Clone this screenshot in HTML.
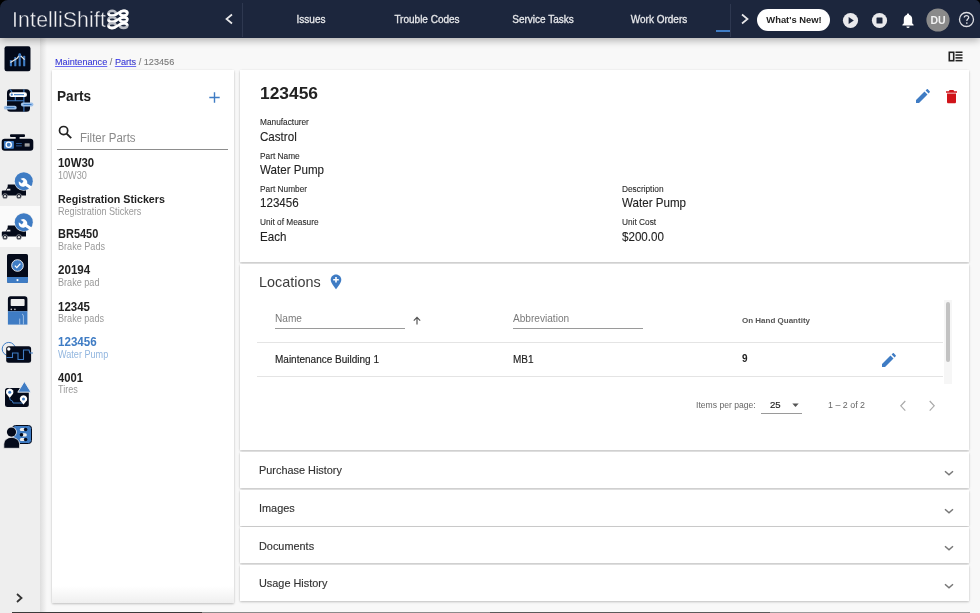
<!DOCTYPE html>
<html><head><meta charset="utf-8"><style>
html,body{margin:0;padding:0;width:980px;height:613px;overflow:hidden;background:#000;}
body{position:relative;font-family:"Liberation Sans",sans-serif;}
.t{will-change:transform;}
.r{position:absolute;}
.t{position:absolute;white-space:nowrap;}
u{color:#2424f0;text-decoration:underline;text-decoration-color:#6b6bf2;}
</style></head><body>
<div class="r" style="left:0px;top:0px;width:980px;height:613px;background:#f8f8f8;"></div>
<div class="r" style="left:0px;top:37px;width:40px;height:576px;background:#eeeeee;"></div>
<div class="r" style="left:40px;top:37px;width:7px;height:576px;background:linear-gradient(90deg,#dedede,#f8f8f8);"></div>
<div class="r" style="left:0px;top:206px;width:40px;height:41px;background:#fafafa;"></div>
<div class="r" style="left:0px;top:0px;width:980px;height:37.5px;background:#1c263d;box-shadow:0 2px 8px rgba(0,0,0,0.33);"></div>
<svg class="r" style="left:0;top:0" width="12" height="12"><path d="M0 0H8A8 8 0 0 0 0 8Z" fill="#000"/></svg>
<svg class="r" style="left:968px;top:0" width="12" height="12"><path d="M12 0H7A5 5 0 0 1 12 5Z" fill="#000"/></svg>
<div class="t" style="left:11.8px;top:10.27px;font-size:21.3px;line-height:21.3px;color:#f0f0f2;-webkit-text-stroke:0.4px #1c263d;letter-spacing:0.15px;">IntelliShift</div>
<svg class="r" style="left:107.3px;top:8.5px;" width="22" height="22" viewBox="0 0 22 22"><ellipse cx="5.2" cy="4.2" rx="3.7" ry="2.3" stroke="#b9bcc4" stroke-width="2.6" fill="none"/><ellipse cx="16.6" cy="4.2" rx="3.7" ry="2.3" stroke="#fff" stroke-width="2.6" fill="none"/><path d="M1.5 4.2 C1.5 7.5 7 7.5 11 4.2 S20.3 0.9000000000000004 20.3 4.2" stroke="#fff" stroke-width="2.6" fill="none"/><ellipse cx="5.2" cy="10.6" rx="3.7" ry="2.3" stroke="#b9bcc4" stroke-width="2.6" fill="none"/><ellipse cx="16.6" cy="10.6" rx="3.7" ry="2.3" stroke="#fff" stroke-width="2.6" fill="none"/><path d="M1.5 10.6 C1.5 13.899999999999999 7 13.899999999999999 11 10.6 S20.3 7.3 20.3 10.6" stroke="#fff" stroke-width="2.6" fill="none"/><ellipse cx="5.2" cy="16.6" rx="3.7" ry="2.3" stroke="#b9bcc4" stroke-width="2.6" fill="none"/><ellipse cx="16.6" cy="16.6" rx="3.7" ry="2.3" stroke="#b9bcc4" stroke-width="2.6" fill="none"/><path d="M1.5 16.6 C1.5 19.900000000000002 7 19.900000000000002 11 16.6 S20.3 13.3 20.3 16.6" stroke="#fff" stroke-width="2.6" fill="none"/></svg>
<svg class="r" style="left:224px;top:13px;" width="10" height="12" viewBox="0 0 10 12"><path d="M8 1.5 L2.5 6 L8 10.5" stroke="#e8e8ea" stroke-width="1.7" fill="none"/></svg>
<div class="r" style="left:242px;top:3px;width:1px;height:34px;background:#2e3850;"></div>
<div class="t" style="left:111px;width:400px;text-align:center;top:14.73px;font-size:10px;line-height:10px;color:#e6e7ea;-webkit-text-stroke:0.3px #e6e7ea;">Issues</div>
<div class="t" style="left:227px;width:400px;text-align:center;top:14.73px;font-size:10px;line-height:10px;color:#e6e7ea;-webkit-text-stroke:0.3px #e6e7ea;">Trouble Codes</div>
<div class="t" style="left:343px;width:400px;text-align:center;top:14.73px;font-size:10px;line-height:10px;color:#e6e7ea;-webkit-text-stroke:0.3px #e6e7ea;">Service Tasks</div>
<div class="t" style="left:458.5px;width:400px;text-align:center;top:14.73px;font-size:10px;line-height:10px;color:#e6e7ea;-webkit-text-stroke:0.3px #e6e7ea;">Work Orders</div>
<div class="r" style="left:716px;top:30px;width:15px;height:2px;background:#3f7cc4;"></div>
<div class="r" style="left:730px;top:4px;width:1px;height:33px;background:#2e3850;"></div>
<svg class="r" style="left:740px;top:13px;" width="10" height="12" viewBox="0 0 10 12"><path d="M2 1.5 L7.5 6 L2 10.5" stroke="#e8e8ea" stroke-width="1.7" fill="none"/></svg>
<div class="r" style="left:757px;top:9px;width:73px;height:22px;background:#fff;border-radius:11px;"></div>
<div class="t" style="left:593.5px;width:400px;text-align:center;top:15.29px;font-size:9.4px;line-height:9.4px;color:#222;font-weight:700;">What's New!</div>
<svg class="r" style="left:842px;top:12px;" width="17" height="17" viewBox="0 0 17 17"><circle cx="8.5" cy="8.5" r="7.6" fill="#e9e9ec"/><path d="M6.6 4.9 L11.8 8.5 L6.6 12.1Z" fill="#1c263d"/></svg>
<svg class="r" style="left:871px;top:12px;" width="17" height="17" viewBox="0 0 17 17"><circle cx="8.5" cy="8.5" r="7.6" fill="#e9e9ec"/><rect x="5.5" y="5.5" width="6" height="6" rx="0.6" fill="#1c263d"/></svg>
<svg class="r" style="left:901px;top:12px;" width="14" height="17" viewBox="0 0 14 17"><path d="M7 1.5 C7.8 1.5 8.1 2.1 8.1 2.7 C10.3 3.3 11.2 5 11.2 7.4 V11.2 L12.6 12.8 V13.6 H1.4 V12.8 L2.8 11.2 V7.4 C2.8 5 3.7 3.3 5.9 2.7 C5.9 2.1 6.2 1.5 7 1.5Z" fill="#fff"/><path d="M5.4 14.4 H8.6 A1.6 1.6 0 0 1 5.4 14.4Z" fill="#fff"/></svg>
<svg class="r" style="left:926px;top:8px;" width="24" height="24" viewBox="0 0 24 24"><circle cx="12" cy="12" r="11.6" fill="#8a8a8a"/></svg>
<div class="t" style="left:738px;width:400px;text-align:center;top:15.36px;font-size:10.5px;line-height:10.5px;color:#f2f2f2;font-weight:700;">DU</div>
<svg class="r" style="left:958px;top:11.2px;" width="17" height="17" viewBox="0 0 17 17"><circle cx="8.5" cy="8.5" r="7.0" stroke="#dcdde2" stroke-width="1.3" fill="none"/><path d="M6.3 6.6 C6.3 5.2 7.3 4.6 8.5 4.6 C9.7 4.6 10.7 5.4 10.7 6.5 C10.7 8 8.8 8.2 8.8 9.9" stroke="#dcdde2" stroke-width="1.3" fill="none"/><circle cx="8.8" cy="12.0" r="0.85" fill="#dcdde2"/></svg>
<div class="t" style="left:54.5px;top:57.55px;font-size:9.15px;line-height:9.15px;color:#777;white-space:nowrap;-webkit-text-stroke:0.1px #777;"><u>Maintenance</u> / <u>Parts</u> / 123456</div>
<svg class="r" style="left:947.7px;top:50.8px;" width="16" height="12" viewBox="0 0 16 12"><rect x="1.3" y="1.3" width="4.4" height="8.4" stroke="#222" stroke-width="1.6" fill="none"/><rect x="7.5" y="0.5" width="7" height="1.5" fill="#222"/><rect x="7.5" y="3.3" width="7" height="1.5" fill="#222"/><rect x="7.5" y="6.1" width="7" height="1.5" fill="#222"/><rect x="7.5" y="8.9" width="7" height="1.5" fill="#222"/></svg>
<div class="r" style="left:52px;top:70px;width:182px;height:533px;background:#fff;box-shadow:0 1px 2px rgba(0,0,0,0.16),0 1px 3px rgba(0,0,0,0.08),0 0 2px rgba(0,0,0,0.05);"></div>
<div class="r" style="left:52px;top:586px;width:182px;height:17px;background:linear-gradient(rgba(240,240,240,0),#efefef);"></div>
<div class="t" style="left:57.3px;top:89.79px;font-size:13.6px;line-height:13.6px;color:#222;font-weight:700;transform:scaleY(1.1);transform-origin:0 11.51px;">Parts</div>
<svg class="r" style="left:208.5px;top:91.5px;" width="11" height="11" viewBox="0 0 11 11"><path d="M5.5 0.3 V10.7 M0.3 5.5 H10.7" stroke="#3f7cc4" stroke-width="1.4"/></svg>
<svg class="r" style="left:58px;top:125px;" width="15" height="15" viewBox="0 0 15 15"><circle cx="5.6" cy="5.6" r="4.1" stroke="#222" stroke-width="1.7" fill="none"/><path d="M8.6 8.6 L13.2 13.2" stroke="#222" stroke-width="1.9"/></svg>
<div class="t" style="left:80.4px;top:132.52px;font-size:11.5px;line-height:11.5px;color:#8a8a8a;transform:scaleY(1.08);transform-origin:0 9.73px;">Filter Parts</div>
<div class="r" style="left:57px;top:149px;width:171px;height:1px;background:#8d8d8d;"></div>
<div class="t" style="left:57.5px;top:157.60px;font-size:11.4px;line-height:11.4px;color:#222;font-weight:700;transform:scaleY(1.08);transform-origin:0 9.65px;">10W30</div>
<div class="t" style="left:57.5px;top:171.55px;font-size:9.1px;line-height:9.1px;color:#9a9a9a;transform:scaleY(1.12);transform-origin:0 7.70px;">10W30</div>
<div class="t" style="left:57.5px;top:194.19px;font-size:10.7px;line-height:10.7px;color:#222;font-weight:700;transform:scaleY(1.08);transform-origin:0 9.06px;">Registration Stickers</div>
<div class="t" style="left:57.5px;top:207.55px;font-size:9.1px;line-height:9.1px;color:#9a9a9a;transform:scaleY(1.12);transform-origin:0 7.70px;">Registration Stickers</div>
<div class="t" style="left:57.5px;top:228.94px;font-size:11.0px;line-height:11.0px;color:#222;font-weight:700;transform:scaleY(1.08);transform-origin:0 9.31px;">BR5450</div>
<div class="t" style="left:57.5px;top:242.55px;font-size:9.1px;line-height:9.1px;color:#9a9a9a;transform:scaleY(1.12);transform-origin:0 7.70px;">Brake Pads</div>
<div class="t" style="left:57.5px;top:264.43px;font-size:11.6px;line-height:11.6px;color:#222;font-weight:700;transform:scaleY(1.08);transform-origin:0 9.82px;">20194</div>
<div class="t" style="left:57.5px;top:278.55px;font-size:9.1px;line-height:9.1px;color:#9a9a9a;transform:scaleY(1.12);transform-origin:0 7.70px;">Brake pad</div>
<div class="t" style="left:57.5px;top:301.52px;font-size:11.5px;line-height:11.5px;color:#222;font-weight:700;transform:scaleY(1.08);transform-origin:0 9.73px;">12345</div>
<div class="t" style="left:57.5px;top:314.55px;font-size:9.1px;line-height:9.1px;color:#9a9a9a;transform:scaleY(1.12);transform-origin:0 7.70px;">Brake pads</div>
<div class="t" style="left:57.5px;top:336.43px;font-size:11.6px;line-height:11.6px;color:#3f7cc4;font-weight:700;transform:scaleY(1.08);transform-origin:0 9.82px;">123456</div>
<div class="t" style="left:57.5px;top:350.55px;font-size:9.1px;line-height:9.1px;color:#92b6df;transform:scaleY(1.12);transform-origin:0 7.70px;">Water Pump</div>
<div class="t" style="left:57.5px;top:372.77px;font-size:11.2px;line-height:11.2px;color:#222;font-weight:700;transform:scaleY(1.08);transform-origin:0 9.48px;">4001</div>
<div class="t" style="left:57.5px;top:385.55px;font-size:9.1px;line-height:9.1px;color:#9a9a9a;transform:scaleY(1.12);transform-origin:0 7.70px;">Tires</div>
<div class="r" style="left:240px;top:70px;width:729px;height:192px;background:#fff;box-shadow:0 1px 2px rgba(0,0,0,0.16),0 1px 3px rgba(0,0,0,0.08),0 0 2px rgba(0,0,0,0.05);"></div>
<div class="t" style="left:260.3px;top:84.52px;font-size:17.4px;line-height:17.4px;color:#222;font-weight:700;">123456</div>
<svg class="r" style="left:915px;top:89px;" width="15" height="15" viewBox="0 0 15 15"><path d="M1 14 V11 L9.5 2.5 L12.5 5.5 L4 14Z M10.6 1.4 L11.8 0.3 C12.1 0 12.5 0 12.8 0.3 L14.7 2.2 C15 2.5 15 2.9 14.7 3.2 L13.6 4.4Z" fill="#3f7cc4"/></svg>
<svg class="r" style="left:945px;top:89px;" width="13" height="15" viewBox="0 0 13 15"><path d="M1 2.2 H3.8 L4.6 1.1 H8.4 L9.2 2.2 H12 V3.7 H1Z M2 4.6 H11 V13 C11 13.8 10.4 14.3 9.6 14.3 H3.4 C2.6 14.3 2 13.8 2 13Z" fill="#d0141a"/></svg>
<div class="t" style="left:259.8px;top:118.47px;font-size:8.3px;line-height:8.3px;color:#2a2a2a;-webkit-text-stroke:0.1px #2a2a2a;">Manufacturer</div>
<div class="t" style="left:259.8px;top:131.43px;font-size:11.6px;line-height:11.6px;color:#222;transform:scaleY(1.08);transform-origin:0 9.82px;-webkit-text-stroke:0.1px #222;">Castrol</div>
<div class="t" style="left:259.8px;top:152.47px;font-size:8.3px;line-height:8.3px;color:#2a2a2a;-webkit-text-stroke:0.1px #2a2a2a;">Part Name</div>
<div class="t" style="left:259.8px;top:164.43px;font-size:11.6px;line-height:11.6px;color:#222;transform:scaleY(1.08);transform-origin:0 9.82px;-webkit-text-stroke:0.1px #222;">Water Pump</div>
<div class="t" style="left:259.8px;top:185.47px;font-size:8.3px;line-height:8.3px;color:#2a2a2a;-webkit-text-stroke:0.1px #2a2a2a;">Part Number</div>
<div class="t" style="left:259.8px;top:197.43px;font-size:11.6px;line-height:11.6px;color:#222;transform:scaleY(1.08);transform-origin:0 9.82px;-webkit-text-stroke:0.1px #222;">123456</div>
<div class="t" style="left:259.8px;top:218.47px;font-size:8.3px;line-height:8.3px;color:#2a2a2a;-webkit-text-stroke:0.1px #2a2a2a;">Unit of Measure</div>
<div class="t" style="left:259.8px;top:231.43px;font-size:11.6px;line-height:11.6px;color:#222;transform:scaleY(1.08);transform-origin:0 9.82px;-webkit-text-stroke:0.1px #222;">Each</div>
<div class="t" style="left:621.5999999999999px;top:185.47px;font-size:8.3px;line-height:8.3px;color:#2a2a2a;-webkit-text-stroke:0.1px #2a2a2a;">Description</div>
<div class="t" style="left:621.5999999999999px;top:197.43px;font-size:11.6px;line-height:11.6px;color:#222;transform:scaleY(1.08);transform-origin:0 9.82px;-webkit-text-stroke:0.1px #222;">Water Pump</div>
<div class="t" style="left:621.5999999999999px;top:218.47px;font-size:8.3px;line-height:8.3px;color:#2a2a2a;-webkit-text-stroke:0.1px #2a2a2a;">Unit Cost</div>
<div class="t" style="left:621.5999999999999px;top:231.43px;font-size:11.6px;line-height:11.6px;color:#222;transform:scaleY(1.08);transform-origin:0 9.82px;-webkit-text-stroke:0.1px #222;">$200.00</div>
<div class="r" style="left:240px;top:264px;width:729px;height:186px;background:#fff;box-shadow:0 1px 2px rgba(0,0,0,0.16),0 1px 3px rgba(0,0,0,0.08),0 0 2px rgba(0,0,0,0.05);"></div>
<div class="t" style="left:258.7px;top:275.01px;font-size:14.4px;line-height:14.4px;color:#3c3c3c;">Locations</div>
<svg class="r" style="left:330px;top:274px;" width="12" height="16" viewBox="0 0 12 16"><path d="M6 0.6 C9 0.6 11.3 2.9 11.3 5.8 C11.3 9.3 6 15.2 6 15.2 C6 15.2 0.7 9.3 0.7 5.8 C0.7 2.9 3 0.6 6 0.6Z" fill="#3f7cc4"/><path d="M6 3 V8.6 M3.2 5.8 H8.8" stroke="#fff" stroke-width="1.6"/></svg>
<div class="t" style="left:274.5px;top:313.70px;font-size:10.1px;line-height:10.1px;color:#7a7a7a;">Name</div>
<div class="r" style="left:274.5px;top:328px;width:130px;height:1px;background:#9a9a9a;"></div>
<svg class="r" style="left:412px;top:316px;" width="10" height="9" viewBox="0 0 10 9"><path d="M5 8.5 V1.5 M1.8 4.6 L5 1.4 L8.2 4.6" stroke="#555" stroke-width="1.2" fill="none"/></svg>
<div class="t" style="left:512.7px;top:313.70px;font-size:10.1px;line-height:10.1px;color:#7a7a7a;">Abbreviation</div>
<div class="r" style="left:512.7px;top:328px;width:130px;height:1px;background:#9a9a9a;"></div>
<div class="t" style="left:742px;top:316.93px;font-size:8px;line-height:8px;color:#555;font-weight:700;">On Hand Quantity</div>
<div class="r" style="left:257px;top:342px;width:686px;height:1px;background:#e4e4e4;"></div>
<div class="t" style="left:274.5px;top:354.64px;font-size:10px;line-height:10px;color:#222;-webkit-text-stroke:0.15px #222;">Maintenance Building 1</div>
<div class="t" style="left:512.7px;top:354.64px;font-size:10px;line-height:10px;color:#222;-webkit-text-stroke:0.15px #222;">MB1</div>
<div class="t" style="left:742px;top:354.34px;font-size:10px;line-height:10px;color:#222;font-weight:700;">9</div>
<svg class="r" style="left:881px;top:353px;" width="15" height="15" viewBox="0 0 15 15"><path d="M1 14 V11 L9.5 2.5 L12.5 5.5 L4 14Z M10.6 1.4 L11.8 0.3 C12.1 0 12.5 0 12.8 0.3 L14.7 2.2 C15 2.5 15 2.9 14.7 3.2 L13.6 4.4Z" fill="#3f7cc4"/></svg>
<div class="r" style="left:257px;top:376px;width:686px;height:1px;background:#e4e4e4;"></div>
<div class="r" style="left:943.5px;top:300px;width:8.5px;height:84px;background:#f6f6f6;"></div>
<div class="r" style="left:945.5px;top:302px;width:4px;height:60px;background:#c2c2c2;border-radius:2px;"></div>
<div class="t" style="left:696px;top:401.42px;font-size:8.6px;line-height:8.6px;color:#666;">Items per page:</div>
<div class="t" style="left:769.8px;top:400.17px;font-size:9.6px;line-height:9.6px;color:#222;-webkit-text-stroke:0.15px #222;">25</div>
<svg class="r" style="left:792px;top:403px;" width="7" height="5" viewBox="0 0 7 5"><path d="M0.3 0.5 H6.7 L3.5 4Z" fill="#555"/></svg>
<div class="r" style="left:761px;top:413.3px;width:41px;height:1px;background:#9a9a9a;"></div>
<div class="t" style="left:828px;top:401.17px;font-size:8.9px;line-height:8.9px;color:#666;">1 – 2 of 2</div>
<svg class="r" style="left:899px;top:400px;" width="8" height="12" viewBox="0 0 8 12"><path d="M6.3 1 L1.8 5.8 L6.3 10.6" stroke="#aaa" stroke-width="1.2" fill="none"/></svg>
<svg class="r" style="left:928px;top:400px;" width="8" height="12" viewBox="0 0 8 12"><path d="M1.7 1 L6.2 5.8 L1.7 10.6" stroke="#aaa" stroke-width="1.2" fill="none"/></svg>
<div class="r" style="left:240px;top:452.0px;width:729px;height:36px;background:#fff;box-shadow:0 1px 2px rgba(0,0,0,0.16),0 1px 3px rgba(0,0,0,0.08),0 0 2px rgba(0,0,0,0.05);"></div>
<div class="t" style="left:259px;top:465.17px;font-size:10.9px;line-height:10.9px;color:#333;-webkit-text-stroke:0.15px #333;">Purchase History</div>
<svg class="r" style="left:944px;top:469.8px;" width="10" height="7" viewBox="0 0 10 7"><path d="M1 1.2 L5 4.8 L9 1.2" stroke="#777" stroke-width="1.5" fill="none"/></svg>
<div class="r" style="left:240px;top:489.7px;width:729px;height:36px;background:#fff;box-shadow:0 1px 2px rgba(0,0,0,0.16),0 1px 3px rgba(0,0,0,0.08),0 0 2px rgba(0,0,0,0.05);"></div>
<div class="t" style="left:259px;top:502.87px;font-size:10.9px;line-height:10.9px;color:#333;-webkit-text-stroke:0.15px #333;">Images</div>
<svg class="r" style="left:944px;top:507.5px;" width="10" height="7" viewBox="0 0 10 7"><path d="M1 1.2 L5 4.8 L9 1.2" stroke="#777" stroke-width="1.5" fill="none"/></svg>
<div class="r" style="left:240px;top:527.4px;width:729px;height:36px;background:#fff;box-shadow:0 1px 2px rgba(0,0,0,0.16),0 1px 3px rgba(0,0,0,0.08),0 0 2px rgba(0,0,0,0.05);"></div>
<div class="t" style="left:259px;top:540.57px;font-size:10.9px;line-height:10.9px;color:#333;-webkit-text-stroke:0.15px #333;">Documents</div>
<svg class="r" style="left:944px;top:545.1999999999999px;" width="10" height="7" viewBox="0 0 10 7"><path d="M1 1.2 L5 4.8 L9 1.2" stroke="#777" stroke-width="1.5" fill="none"/></svg>
<div class="r" style="left:240px;top:565.1px;width:729px;height:36px;background:#fff;box-shadow:0 1px 2px rgba(0,0,0,0.16),0 1px 3px rgba(0,0,0,0.08),0 0 2px rgba(0,0,0,0.05);"></div>
<div class="t" style="left:259px;top:578.27px;font-size:10.9px;line-height:10.9px;color:#333;-webkit-text-stroke:0.15px #333;">Usage History</div>
<svg class="r" style="left:944px;top:582.9px;" width="10" height="7" viewBox="0 0 10 7"><path d="M1 1.2 L5 4.8 L9 1.2" stroke="#777" stroke-width="1.5" fill="none"/></svg>
<div class="r" style="left:12px;top:612px;width:190px;height:1px;background:#3a3a3a;"></div>
<div class="r" style="left:202px;top:612px;width:288px;height:1px;background:#8a8a8a;"></div>
<div class="r" style="left:490px;top:612px;width:280px;height:1px;background:#5a5a5a;"></div>
<div class="r" style="left:770px;top:612px;width:200px;height:1px;background:#9a9a9a;"></div>
<svg class="r" style="left:15px;top:593px;" width="9" height="10" viewBox="0 0 9 10"><path d="M2 1 L6.5 5 L2 9" stroke="#333" stroke-width="1.8" fill="none"/></svg>
<svg class="r" style="left:0;top:0" width="40" height="613" viewBox="0 0 40 613"><rect x="4.5" y="46.2" width="26" height="25" rx="2.2" fill="#040a1a"/><rect x="9.85" y="60" width="2.1" height="6.299999999999997" rx="0.6" fill="#3f7cc4"/><rect x="14.25" y="57.1" width="2.1" height="9.199999999999996" rx="0.6" fill="#3f7cc4"/><rect x="18.65" y="53.2" width="2.1" height="13.099999999999994" rx="0.6" fill="#3f7cc4"/><rect x="23.15" y="55.8" width="2.1" height="10.5" rx="0.6" fill="#3f7cc4"/><path d="M10.4 62.6 L17.2 58.2 L19.7 55 L24.6 59.6" stroke="#e6e6e6" stroke-width="1.2" fill="none"/><circle cx="19.7" cy="55.2" r="1.4" fill="#3f7cc4"/><rect x="7" y="89.3" width="23" height="22.5" rx="3.5" fill="#040a1a"/><path d="M23.9 89.3 V111.8 M7 100.7 H23.9 M15.3 96 V100.7 M10 89.3 L12 92" stroke="#3f7cc4" stroke-width="1.1" fill="none"/><rect x="9.2" y="92.3" width="17.8" height="4.7" rx="2.35" fill="#fff"/><circle cx="11.8" cy="94.65" r="1.1" fill="#3f7cc4"/><rect x="14" y="94.1" width="10" height="1.1" fill="#3f7cc4"/><rect x="20.9" y="102.6" width="12.5" height="3.8" rx="1.9" fill="#9cc0ea"/><rect x="23.5" y="104" width="8" height="1" fill="#3f7cc4"/><rect x="3.9" y="105.7" width="12.8" height="3.9" rx="1.95" fill="#9cc0ea"/><rect x="6.5" y="107.1" width="8" height="1" fill="#3f7cc4"/><rect x="10" y="134.3" width="15" height="2.6" rx="1" fill="#040a1a"/><rect x="15.7" y="136" width="3.9" height="3.5" fill="#040a1a"/><rect x="1.7" y="138.8" width="31.6" height="11.9" rx="3" fill="#040a1a"/><rect x="3.9" y="140.9" width="10" height="7.8" rx="0.8" fill="#3f7cc4"/><circle cx="8.7" cy="144.8" r="2.6" stroke="#fff" stroke-width="1.3" fill="none"/><rect x="16.1" y="143" width="5.7" height="0.9" fill="#2f5e9a"/><rect x="16.1" y="145.4" width="5.7" height="0.9" fill="#2f5e9a"/><rect x="24.7" y="143.4" width="4.9" height="3.1" fill="#bbb"/><rect x="24.7" y="144.8" width="4.9" height="0.5" fill="#555"/><path d="M7.8 184.4 H26 V195.6 H1.8 V191.4 Q1.8 190.6 2.8 190.6 H5.6 L7.6 187 Z" fill="#040a1a"/><path d="M7.2 188.8 H10.4 V190.6 H6.3 Z" fill="#e8e8e8"/><circle cx="5" cy="196.2" r="2.5" fill="#040a1a" stroke="#eee" stroke-width="0.5"/><circle cx="5" cy="196.2" r="1.2" fill="#ddd"/><circle cx="18.9" cy="196.2" r="2.5" fill="#040a1a" stroke="#eee" stroke-width="0.5"/><circle cx="18.9" cy="196.2" r="1.2" fill="#ddd"/><circle cx="23.8" cy="181.2" r="9.6" fill="#eee"/><circle cx="23.8" cy="181.2" r="9.0" fill="#3f7cc4"/><g transform="translate(23 182.4) rotate(35)"><circle cx="0" cy="0" r="4.3" fill="#fff"/><rect x="-5.5" y="-1.5" width="5.2" height="3" fill="#3f7cc4"/><rect x="0" y="-1.5" width="9.5" height="3" fill="#fff"/></g><path d="M7.8 225.4 H26 V236.6 H1.8 V232.4 Q1.8 231.6 2.8 231.6 H5.6 L7.6 228 Z" fill="#040a1a"/><path d="M7.2 229.8 H10.4 V231.6 H6.3 Z" fill="#e8e8e8"/><circle cx="5" cy="237.2" r="2.5" fill="#040a1a" stroke="#eee" stroke-width="0.5"/><circle cx="5" cy="237.2" r="1.2" fill="#ddd"/><circle cx="18.9" cy="237.2" r="2.5" fill="#040a1a" stroke="#eee" stroke-width="0.5"/><circle cx="18.9" cy="237.2" r="1.2" fill="#ddd"/><circle cx="23.8" cy="222.2" r="9.6" fill="#eee"/><circle cx="23.8" cy="222.2" r="9.0" fill="#3f7cc4"/><g transform="translate(23 223.4) rotate(35)"><circle cx="0" cy="0" r="4.3" fill="#fff"/><rect x="-5.5" y="-1.5" width="5.2" height="3" fill="#3f7cc4"/><rect x="0" y="-1.5" width="9.5" height="3" fill="#fff"/></g><rect x="7" y="254" width="21" height="28.9" rx="1.6" fill="#040a1a"/><path d="M7 277 H28 V281.3 A1.6 1.6 0 0 1 26.4 282.9 H8.6 A1.6 1.6 0 0 1 7 281.3Z" fill="#3f7cc4"/><circle cx="17.5" cy="280.1" r="1.1" fill="#fff"/><circle cx="17.5" cy="265.5" r="5.8" fill="#3f7cc4" stroke="#fff" stroke-width="0.9"/><path d="M14.8 265.6 L16.8 267.6 L20.4 263.6" stroke="#fff" stroke-width="1.3" fill="none"/><path d="M7.9 311.2 V299 A2.7 2.7 0 0 1 10.6 296.3 H24.7 A2.7 2.7 0 0 1 27.4 299 V311.2Z" fill="#040a1a"/><rect x="7.9" y="311.2" width="19.5" height="13.4" fill="#3f7cc4"/><rect x="10.7" y="299.1" width="13.9" height="6.9" rx="0.8" fill="#eee"/><circle cx="11.3" cy="309.4" r="0.8" fill="#ccc"/><circle cx="14.9" cy="309.4" r="0.8" fill="#ccc"/><path d="M19.7 324.6 V318.6 M23.4 324.6 V316 Q23.4 314.5 22 314" stroke="#a9c6ea" stroke-width="0.9" fill="none"/><circle cx="8.8" cy="349" r="6.6" stroke="#3f7cc4" stroke-width="1" fill="none"/><rect x="6.2" y="346.3" width="24.9" height="16.5" rx="2.5" fill="#040a1a"/><circle cx="8.8" cy="349" r="1.7" fill="#fff"/><path d="M6.5 357.5 H12.5 V353 H18 V359.5 H23.5 V350 H29 L29.8 353 H33" stroke="#3f7cc4" stroke-width="1.1" fill="none"/><rect x="5" y="388" width="23.8" height="19.1" rx="2.5" fill="#040a1a"/><path d="M24.4 381.4 L31 392.2 H17.8Z" fill="#3f7cc4" stroke="#f0f0f0" stroke-width="0.9" stroke-linejoin="round"/><path d="M9.7 398 L10.2 400 L12.5 401 L13 403 H23" stroke="#3f7cc4" stroke-width="1" fill="none"/><path d="M9.7 397.9 L6.3999999999999995 393.8 A3.7 3.7 0 1 1 13.0 393.8Z" fill="#fff"/><circle cx="9.7" cy="392.2" r="1.5" fill="#3f7cc4"/><path d="M23.5 404.4 L20.2 400.5 A3.7 3.7 0 1 1 26.8 400.5Z" fill="#fff"/><circle cx="23.5" cy="398.9" r="1.5" fill="#3f7cc4"/><rect x="12.5" y="425.5" width="19" height="18" rx="3" fill="#3f7cc4" stroke="#040a1a" stroke-width="1"/><rect x="19.8" y="428" width="5.5" height="3.1" rx="1.5" fill="#eee"/><circle cx="25.6" cy="429.5" r="1.8" fill="#040a1a"/><rect x="21.8" y="433.3" width="5" height="3.1" rx="1.5" fill="#eee"/><circle cx="21.5" cy="434.8" r="1.8" fill="#040a1a"/><rect x="19.8" y="438" width="5.5" height="3.1" rx="1.5" fill="#eee"/><circle cx="25.6" cy="439.5" r="1.8" fill="#040a1a"/><circle cx="11.5" cy="432.1" r="5.3" fill="#eee"/><circle cx="11.5" cy="432.1" r="4.6" fill="#040a1a"/><path d="M3.8 448.3 V444.5 C3.8 440.5 6.8 437.4 11.5 437.4 C16.2 437.4 19.6 440.5 19.6 444.5 V448.3Z" fill="#040a1a" stroke="#eee" stroke-width="0.8"/></svg>
</body></html>
